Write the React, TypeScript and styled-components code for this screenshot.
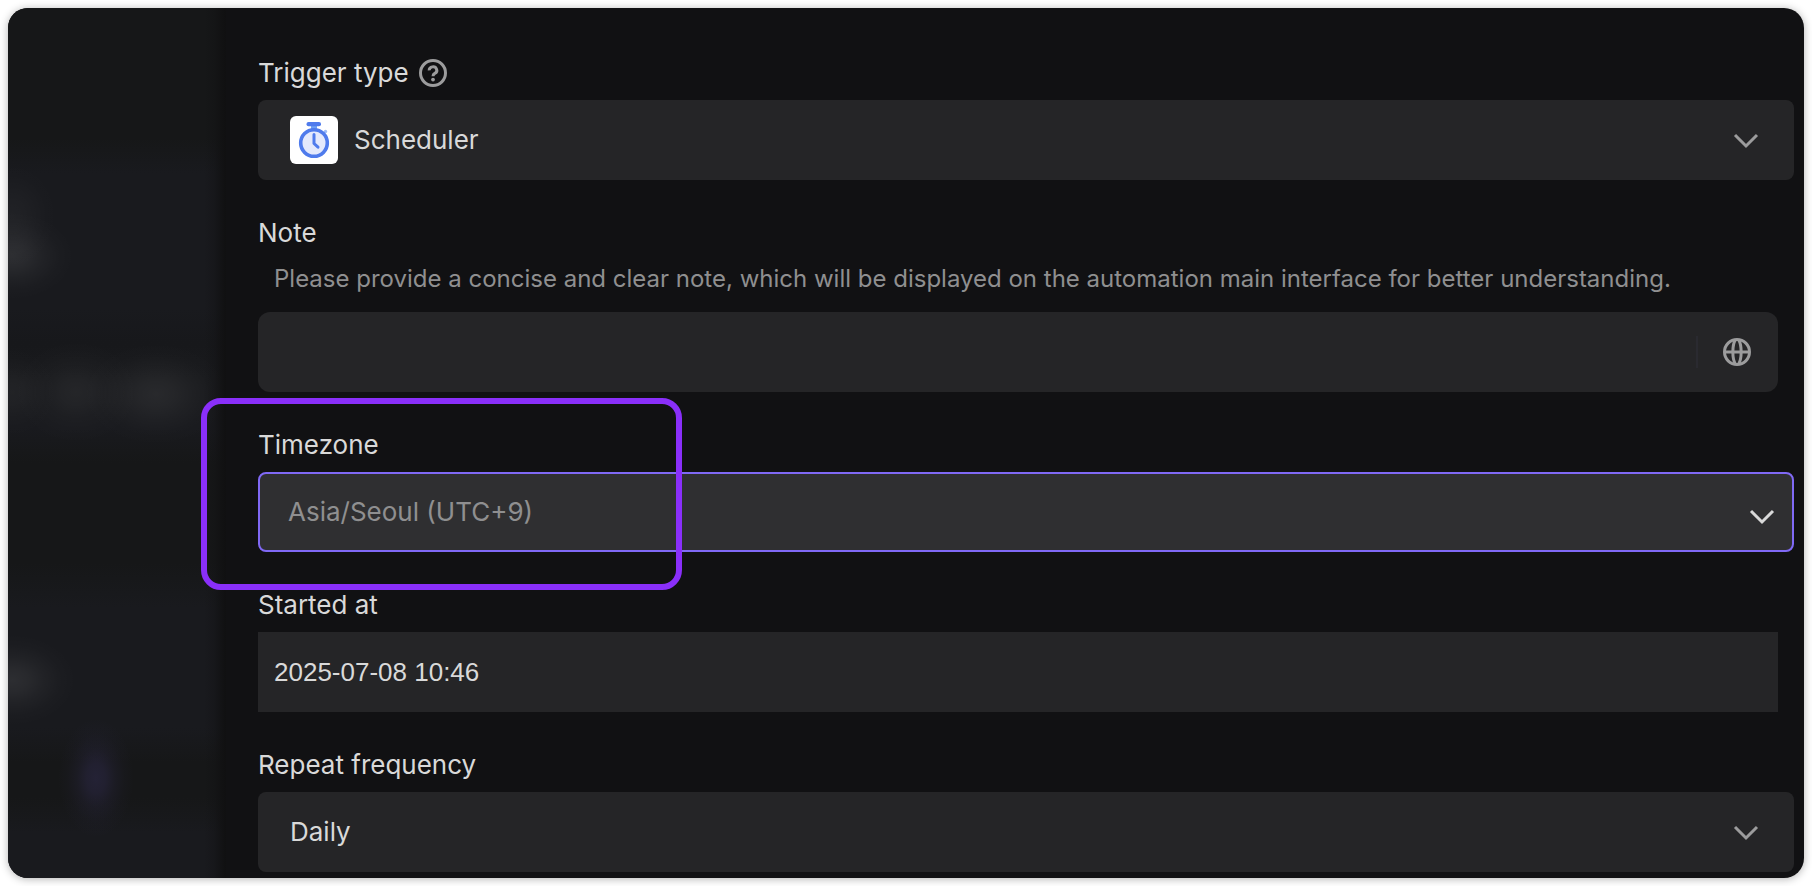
import React from "react";
import styled, { createGlobalStyle, css } from "styled-components";

const GlobalStyle = createGlobalStyle`
  *, *::before, *::after { box-sizing: border-box; }
  body {
    margin: 0;
    background: #ffffff;
    font-family: Inter, "Noto Sans", sans-serif;
    color: #d9d9d9;
  }
  input, select, button { font: inherit; color: inherit; }
`;

const Window = styled.main`
  display: grid;
  grid-template-columns: 218px minmax(0, 1fr);
  margin: 8px;
  border-radius: 20px;
  overflow: hidden;
  background: #111113;
  box-shadow: 0 1px 8px rgba(0, 0, 0, 0.3);
`;

/* Soft spot of light with a bell-shaped falloff. */
const glow = (size: string, at: string, rgb: string, strength: number) =>
  `radial-gradient(${size} at ${at}, ${[1, 0.8, 0.4, 0.12, 0]
    .map((a, i) => `rgba(${rgb}, ${(a * strength).toFixed(3)}) ${i * 25}%`)
    .join(", ")})`;

const Backdrop = styled.aside`
  background:
    linear-gradient(90deg, transparent 196px, rgba(17, 17, 19, 0.3) 206px, #101011 218px),
    ${glow("62px 44px", "4px 248px", "255, 255, 255", 0.085)},
    ${glow("48px 56px", "4px 208px", "255, 255, 255", 0.035)},
    ${glow("62px 52px", "68px 384px", "255, 255, 255", 0.05)},
    ${glow("74px 52px", "148px 386px", "255, 255, 255", 0.065)},
    ${glow("48px 48px", "4px 384px", "255, 255, 255", 0.04)},
    ${glow("64px 46px", "4px 672px", "255, 255, 255", 0.085)},
    ${glow("38px 60px", "88px 770px", "116, 96, 220", 0.15)},
    linear-gradient(
      #161718 130px, #191a1e 165px, #191a1e 300px, #17181b 335px,
      #191a1d 370px, #191a1e 420px, #161718 455px, #161718 555px,
      #191a1e 600px, #191a1e 720px, #161718 755px, #161718 790px,
      #191a1e 825px
    );
`;

const Form = styled.form`
  display: flex;
  flex-direction: column;
  gap: 32px;
  padding: 44px 10px 6px 32px;
`;

const Field = styled.div<{ $inset?: boolean }>`
  position: relative;
  display: flex;
  flex-direction: column;
  gap: 6px;
  margin-right: ${(p) => (p.$inset ? "16px" : "0")};
`;

const LabelRow = styled.div`
  display: flex;
  align-items: center;
  gap: 10px;
`;

const Label = styled.label`
  font-size: 26px;
  line-height: 42px;
`;

const IconButton = styled.button`
  display: flex;
  align-items: center;
  justify-content: center;
  padding: 0;
  border: 0;
  background: none;
  color: #9c9c9d;
  cursor: pointer;
`;

const Hint = styled.p`
  margin: 0 0 8px;
  padding-left: 16px;
  font-size: 24px;
  line-height: 38px;
  color: #8f8f90;
`;

const SelectBox = styled.div`
  display: grid;
  align-items: center;
  height: 80px;
  > * { grid-area: 1 / 1; }
`;

const Select = styled.select<{ $active?: boolean; $withIcon?: boolean }>`
  appearance: none;
  width: 100%;
  height: 100%;
  padding: 0 80px 0 ${(p) => (p.$withIcon ? "96px" : "32px")};
  border: 0;
  border-radius: 8px;
  outline: 0;
  background: #252527;
  font-size: 26px;
  line-height: 40px;
  ${(p) =>
    p.$active &&
    css`
      padding-left: 28px;
      border: 2px solid #8069f5;
      background: #2f2f31;
      color: #8f8f90;
    `}
`;

const Arrow = styled.span<{ $active?: boolean }>`
  display: flex;
  justify-self: end;
  padding: ${(p) => (p.$active ? "8px 18px 0 0" : "0 34px 0 0")};
  color: ${(p) => (p.$active ? "#d9d9d9" : "#9c9c9d")};
  pointer-events: none;
`;

const OptionIcon = styled.span`
  display: flex;
  width: 48px;
  height: 48px;
  margin-left: 32px;
  border-radius: 6px;
  background: #ffffff;
  pointer-events: none;
`;

const NoteBox = styled.div`
  display: flex;
  align-items: center;
  height: 80px;
  border-radius: 12px;
  background: #252527;
`;

const NoteInput = styled.input`
  flex: 1;
  min-width: 0;
  height: 100%;
  padding: 0 16px;
  border: 0;
  outline: 0;
  background: none;
  font-size: 26px;
`;

const Divider = styled.span`
  width: 2px;
  height: 32px;
  background: #2a2a30;
`;

const GlobeButton = styled(IconButton)`
  width: 80px;
  height: 100%;
  padding-right: 2px;
`;

const DateInput = styled.input`
  width: 100%;
  height: 80px;
  padding: 0 16px;
  border: 0;
  outline: 0;
  background: #252527;
  font-family: "Liberation Sans", Arial, sans-serif;
  font-size: 26px;
`;

const Highlight = styled.div`
  position: absolute;
  top: -26px;
  left: -57px;
  width: 481px;
  height: 192px;
  border: 6px solid #8a2ffa;
  border-radius: 20px;
  pointer-events: none;
`;

const Chevron = () => (
  <svg width="28" height="28" viewBox="0 0 28 28" fill="none" stroke="currentColor" strokeWidth="3" aria-hidden="true">
    <path d="M3 9l11 11L25 9" />
  </svg>
);

const HelpIcon = () => (
  <svg width="28" height="28" viewBox="0 0 28 28" fill="none" stroke="currentColor" strokeWidth="3" aria-hidden="true">
    <circle cx="14" cy="14" r="12.5" />
    <path d="M10.2 11.4a3.8 3.5 0 1 1 5.6 3c-1.2.7-1.8 1.300-1.800 2.900" />
    <circle cx="14" cy="20.600" r="1.900" fill="currentColor" stroke="none" />
  </svg>
);

const GlobeIcon = () => (
  <svg width="28" height="28" viewBox="0 0 28 28" fill="none" stroke="currentColor" strokeWidth="3" aria-hidden="true">
    <circle cx="14" cy="14" r="12.5" />
    <path d="M1.5 14h25" />
    <path d="M12.4 1.8C9 7.500 9 20.500 12.400 26.200M15.600 1.800C19 7.500 19 20.500 15.600 26.200" />
  </svg>
);

const StopwatchIcon = () => (
  <svg width="48" height="48" viewBox="0 0 48 48" fill="none" aria-hidden="true">
    <path d="M21 10h6v4h-6z" fill="#6ea0f5" />
    <circle cx="35.500" cy="15.500" r="1.700" fill="#9dbcf8" />
    <rect x="16.500" y="6" width="14.500" height="4.200" rx="2" fill="#4f7bec" />
    <circle cx="24" cy="27" r="13.300" fill="#e4e9fc" stroke="#4f7bec" strokeWidth="3.600" />
    <path d="M24 18.500v9l4 3.700" stroke="#4f7bec" strokeWidth="3" strokeLinecap="round" strokeLinejoin="round" />
  </svg>
);

export default function App() {
  return (
    <>
      <GlobalStyle />
      <Window>
        <Backdrop aria-hidden="true" />
        <Form onSubmit={(e) => e.preventDefault()}>
          <Field>
            <LabelRow>
              <Label htmlFor="trigger">Trigger type</Label>
              <IconButton type="button" aria-label="About trigger types">
                <HelpIcon />
              </IconButton>
            </LabelRow>
            <SelectBox>
              <Select id="trigger" $withIcon defaultValue="scheduler">
                <option value="scheduler">Scheduler</option>
              </Select>
              <OptionIcon>
                <StopwatchIcon />
              </OptionIcon>
              <Arrow>
                <Chevron />
              </Arrow>
            </SelectBox>
          </Field>

          <Field $inset>
            <Label htmlFor="note">Note</Label>
            <Hint id="note-hint">
              Please provide a concise and clear note, which will be displayed on the automation main interface for better
              understanding.
            </Hint>
            <NoteBox>
              <NoteInput id="note" type="text" aria-describedby="note-hint" />
              <Divider />
              <GlobeButton type="button" aria-label="Translate note">
                <GlobeIcon />
              </GlobeButton>
            </NoteBox>
          </Field>

          <Field>
            <Label htmlFor="timezone">Timezone</Label>
            <SelectBox>
              <Select id="timezone" $active defaultValue="seoul">
                <option value="seoul">Asia/Seoul (UTC+9)</option>
              </Select>
              <Arrow $active>
                <Chevron />
              </Arrow>
            </SelectBox>
            <Highlight />
          </Field>

          <Field $inset>
            <Label htmlFor="started">Started at</Label>
            <DateInput id="started" type="text" defaultValue="2025-07-08 10:46" />
          </Field>

          <Field>
            <Label htmlFor="repeat">Repeat frequency</Label>
            <SelectBox>
              <Select id="repeat" defaultValue="daily">
                <option value="daily">Daily</option>
              </Select>
              <Arrow>
                <Chevron />
              </Arrow>
            </SelectBox>
          </Field>
        </Form>
      </Window>
    </>
  );
}
